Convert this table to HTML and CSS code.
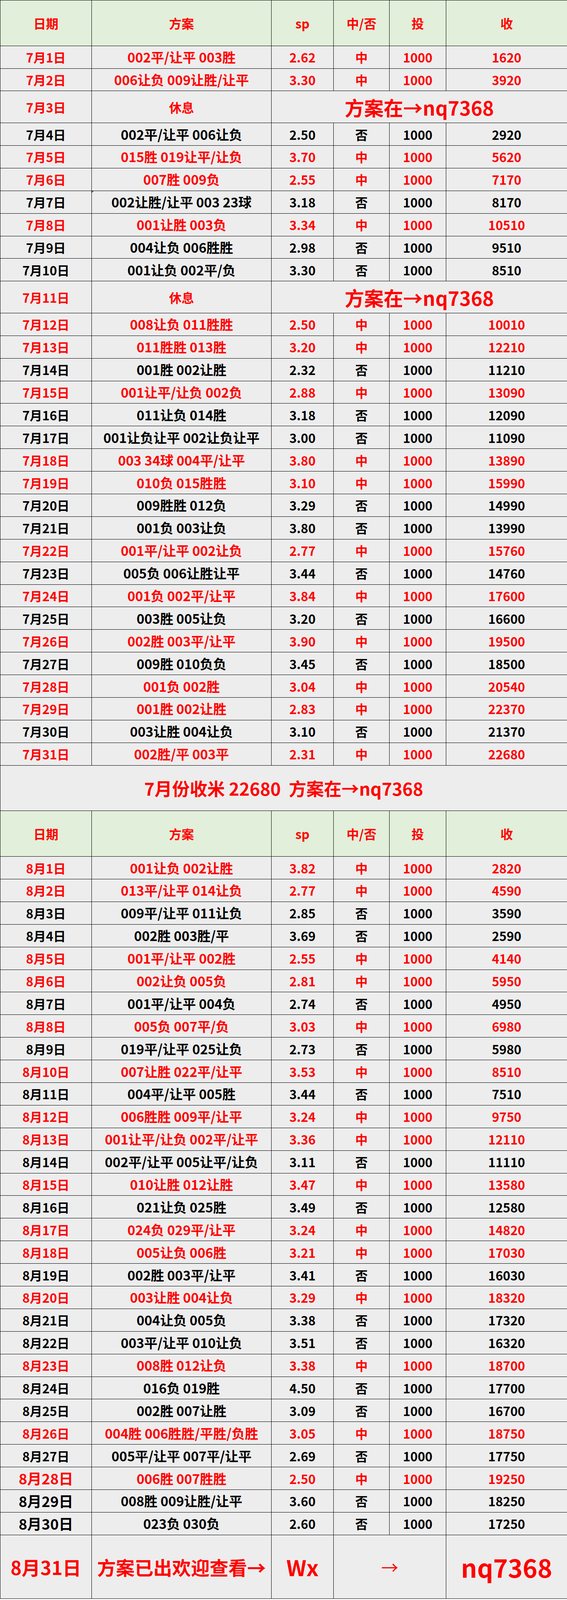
FILE: index.html
```html
<!DOCTYPE html>
<html lang="zh-CN">
<head>
<meta charset="utf-8">
<title>方案</title>
<link rel="stylesheet" href="styles.css">
</head>
<body>
<table class="sheet">
<colgroup>
<col class="c1"><col class="c2"><col class="c3"><col class="c4"><col class="c5"><col class="c6">
</colgroup>
<tbody>
<tr class="head"><td>日期</td><td>方案</td><td>sp</td><td>中/否</td><td>投</td><td>收</td></tr>
<tr class="red"><td>7月1日</td><td>002平/让平 003胜</td><td>2.62</td><td>中</td><td>1000</td><td>1620</td></tr>
<tr class="red"><td>7月2日</td><td>006让负 009让胜/让平</td><td>3.30</td><td>中</td><td>1000</td><td>3920</td></tr>
<tr class="rest red"><td>7月3日</td><td>休息</td><td colspan="4" class="promo">方案在→nq7368</td></tr>
<tr><td>7月4日</td><td>002平/让平 006让负</td><td>2.50</td><td>否</td><td>1000</td><td>2920</td></tr>
<tr class="red"><td>7月5日</td><td>015胜 019让平/让负</td><td>3.70</td><td>中</td><td>1000</td><td>5620</td></tr>
<tr class="red"><td>7月6日</td><td>007胜 009负</td><td>2.55</td><td>中</td><td>1000</td><td>7170</td></tr>
<tr><td>7月7日</td><td class="flag">002让胜/让平 003 23球</td><td>3.18</td><td>否</td><td>1000</td><td>8170</td></tr>
<tr class="red"><td>7月8日</td><td>001让胜 003负</td><td>3.34</td><td>中</td><td>1000</td><td>10510</td></tr>
<tr><td>7月9日</td><td>004让负 006胜胜</td><td>2.98</td><td>否</td><td>1000</td><td>9510</td></tr>
<tr><td>7月10日</td><td>001让负 002平/负</td><td>3.30</td><td>否</td><td>1000</td><td>8510</td></tr>
<tr class="rest red"><td>7月11日</td><td>休息</td><td colspan="4" class="promo">方案在→nq7368</td></tr>
<tr class="red"><td>7月12日</td><td>008让负 011胜胜</td><td>2.50</td><td>中</td><td>1000</td><td>10010</td></tr>
<tr class="red"><td>7月13日</td><td>011胜胜 013胜</td><td>3.20</td><td>中</td><td>1000</td><td>12210</td></tr>
<tr><td>7月14日</td><td>001胜 002让胜</td><td>2.32</td><td>否</td><td>1000</td><td>11210</td></tr>
<tr class="red"><td>7月15日</td><td>001让平/让负 002负</td><td>2.88</td><td>中</td><td>1000</td><td>13090</td></tr>
<tr><td>7月16日</td><td>011让负 014胜</td><td>3.18</td><td>否</td><td>1000</td><td>12090</td></tr>
<tr><td>7月17日</td><td>001让负让平 002让负让平</td><td>3.00</td><td>否</td><td>1000</td><td>11090</td></tr>
<tr class="red"><td>7月18日</td><td>003 34球 004平/让平</td><td>3.80</td><td>中</td><td>1000</td><td>13890</td></tr>
<tr class="red"><td>7月19日</td><td>010负 015胜胜</td><td>3.10</td><td>中</td><td>1000</td><td>15990</td></tr>
<tr><td>7月20日</td><td>009胜胜 012负</td><td>3.29</td><td>否</td><td>1000</td><td>14990</td></tr>
<tr><td>7月21日</td><td>001负 003让负</td><td>3.80</td><td>否</td><td>1000</td><td>13990</td></tr>
<tr class="red"><td>7月22日</td><td>001平/让平 002让负</td><td>2.77</td><td>中</td><td>1000</td><td>15760</td></tr>
<tr><td>7月23日</td><td>005负 006让胜让平</td><td>3.44</td><td>否</td><td>1000</td><td>14760</td></tr>
<tr class="red"><td>7月24日</td><td>001负 002平/让平</td><td>3.84</td><td>中</td><td>1000</td><td>17600</td></tr>
<tr><td>7月25日</td><td>003胜 005让负</td><td>3.20</td><td>否</td><td>1000</td><td>16600</td></tr>
<tr class="red"><td>7月26日</td><td>002胜 003平/让平</td><td>3.90</td><td>中</td><td>1000</td><td>19500</td></tr>
<tr><td>7月27日</td><td>009胜 010负负</td><td>3.45</td><td>否</td><td>1000</td><td>18500</td></tr>
<tr class="red"><td>7月28日</td><td>001负 002胜</td><td>3.04</td><td>中</td><td>1000</td><td>20540</td></tr>
<tr class="red"><td>7月29日</td><td>001胜 002让胜</td><td>2.83</td><td>中</td><td>1000</td><td>22370</td></tr>
<tr><td>7月30日</td><td>003让胜 004让负</td><td>3.10</td><td>否</td><td>1000</td><td>21370</td></tr>
<tr class="red"><td>7月31日</td><td>002胜/平 003平</td><td>2.31</td><td>中</td><td>1000</td><td>22680</td></tr>
<tr class="summary red"><td colspan="6">7月份收米 22680&nbsp;&nbsp;方案在→nq7368</td></tr>
<tr class="head"><td>日期</td><td>方案</td><td>sp</td><td>中/否</td><td>投</td><td>收</td></tr>
<tr class="red"><td>8月1日</td><td>001让负 002让胜</td><td>3.82</td><td>中</td><td>1000</td><td>2820</td></tr>
<tr class="red"><td>8月2日</td><td>013平/让平 014让负</td><td>2.77</td><td>中</td><td>1000</td><td>4590</td></tr>
<tr><td>8月3日</td><td>009平/让平 011让负</td><td>2.85</td><td>否</td><td>1000</td><td>3590</td></tr>
<tr><td>8月4日</td><td>002胜 003胜/平</td><td>3.69</td><td>否</td><td>1000</td><td>2590</td></tr>
<tr class="red"><td>8月5日</td><td>001平/让平 002胜</td><td>2.55</td><td>中</td><td>1000</td><td>4140</td></tr>
<tr class="red"><td>8月6日</td><td>002让负 005负</td><td>2.81</td><td>中</td><td>1000</td><td>5950</td></tr>
<tr><td>8月7日</td><td>001平/让平 004负</td><td>2.74</td><td>否</td><td>1000</td><td>4950</td></tr>
<tr class="red"><td>8月8日</td><td>005负 007平/负</td><td>3.03</td><td>中</td><td>1000</td><td>6980</td></tr>
<tr><td>8月9日</td><td>019平/让平 025让负</td><td>2.73</td><td>否</td><td>1000</td><td>5980</td></tr>
<tr class="red"><td>8月10日</td><td>007让胜 022平/让平</td><td>3.53</td><td>中</td><td>1000</td><td>8510</td></tr>
<tr><td>8月11日</td><td>004平/让平 005胜</td><td>3.44</td><td>否</td><td>1000</td><td>7510</td></tr>
<tr class="red"><td>8月12日</td><td>006胜胜 009平/让平</td><td>3.24</td><td>中</td><td>1000</td><td>9750</td></tr>
<tr class="red"><td>8月13日</td><td>001让平/让负 002平/让平</td><td>3.36</td><td>中</td><td>1000</td><td>12110</td></tr>
<tr><td>8月14日</td><td>002平/让平 005让平/让负</td><td>3.11</td><td>否</td><td>1000</td><td>11110</td></tr>
<tr class="red"><td>8月15日</td><td>010让胜 012让胜</td><td>3.47</td><td>中</td><td>1000</td><td>13580</td></tr>
<tr><td>8月16日</td><td>021让负 025胜</td><td>3.49</td><td>否</td><td>1000</td><td>12580</td></tr>
<tr class="red"><td>8月17日</td><td>024负 029平/让平</td><td>3.24</td><td>中</td><td>1000</td><td>14820</td></tr>
<tr class="red"><td>8月18日</td><td>005让负 006胜</td><td>3.21</td><td>中</td><td>1000</td><td>17030</td></tr>
<tr><td>8月19日</td><td>002胜 003平/让平</td><td>3.41</td><td>否</td><td>1000</td><td>16030</td></tr>
<tr class="red"><td>8月20日</td><td>003让胜 004让负</td><td>3.29</td><td>中</td><td>1000</td><td>18320</td></tr>
<tr><td>8月21日</td><td>004让负 005负</td><td>3.38</td><td>否</td><td>1000</td><td>17320</td></tr>
<tr><td>8月22日</td><td>003平/让平 010让负</td><td>3.51</td><td>否</td><td>1000</td><td>16320</td></tr>
<tr class="red"><td>8月23日</td><td>008胜 012让负</td><td>3.38</td><td>中</td><td>1000</td><td>18700</td></tr>
<tr><td>8月24日</td><td>016负 019胜</td><td>4.50</td><td>否</td><td>1000</td><td>17700</td></tr>
<tr><td>8月25日</td><td>002胜 007让胜</td><td>3.09</td><td>否</td><td>1000</td><td>16700</td></tr>
<tr class="red"><td>8月26日</td><td>004胜 006胜胜/平胜/负胜</td><td>3.05</td><td>中</td><td>1000</td><td>18750</td></tr>
<tr><td>8月27日</td><td>005平/让平 007平/让平</td><td>2.69</td><td>否</td><td>1000</td><td>17750</td></tr>
<tr class="red large"><td>8月28日</td><td>006胜 007胜胜</td><td>2.50</td><td>中</td><td>1000</td><td>19250</td></tr>
<tr class="large"><td>8月29日</td><td>008胜 009让胜/让平</td><td>3.60</td><td>否</td><td>1000</td><td>18250</td></tr>
<tr class="large"><td>8月30日</td><td>023负 030负</td><td>2.60</td><td>否</td><td>1000</td><td>17250</td></tr>
<tr class="final red"><td class="f-date">8月31日</td><td class="f-plan">方案已出欢迎查看→</td><td class="f-wx">Wx</td><td colspan="2" class="f-arrow">→</td><td class="f-id">nq7368</td></tr>
</tbody>
</table>
</body>
</html>
```
FILE: styles.css
```css
html, body {
  margin: 0;
  padding: 0;
  background: #ffffff;
}

/* Row heights are the reference heights scaled to fit the 4096px tall frame */
.sheet {
  border-collapse: collapse;
  table-layout: fixed;
  width: 1451px;
  font-family: "Noto Sans CJK SC", "Noto Sans", sans-serif;
  font-weight: 700;
  font-size: 32px;
  color: #000000;
}

.c1 { width: 234px; }
.c2 { width: 460px; }
.c3 { width: 159px; }
.c4 { width: 143px; }
.c5 { width: 145px; }
.c6 { width: 310px; }

.sheet td {
  border: 1px solid #000000;
  background: #ededed;
  text-align: center;
  vertical-align: middle;
  padding: 0;
  line-height: 1;
  white-space: nowrap;
  overflow: hidden;
}

.sheet td:nth-child(2) { font-size: 34px; }

.sheet tr { height: 57.9px; }

.sheet tr.red td { color: #ff0000; }

.sheet tr.head { height: 116.7px; }
.sheet tr.head td {
  background: #e2efda;
  color: #ff0000;
  font-size: 32px;
}

.sheet tr.rest { height: 81.6px; }
.sheet tr.rest td:nth-child(2) { font-size: 32px; }
.sheet td.promo { font-size: 50px; }

.sheet tr.summary { height: 116.7px; }
.sheet tr.summary td { font-size: 45px; }

.sheet tr.large td:first-child { font-size: 37px; }

.sheet tr.final { height: 163.2px; }
.sheet tr.final td.f-date { font-size: 48px; }
.sheet tr.final td.f-plan { font-size: 48px; }
.sheet tr.final td.f-wx { font-size: 56px; }
.sheet tr.final td.f-arrow { font-size: 44px; font-weight: 400; }
.sheet tr.final td.f-id { font-size: 64px; }

.sheet td.flag {
  position: relative;
}
.sheet td.flag::before {
  content: "";
  position: absolute;
  left: 0;
  top: 0;
  border-top: 5px solid #1e8a1e;
  border-right: 5px solid transparent;
}
```
